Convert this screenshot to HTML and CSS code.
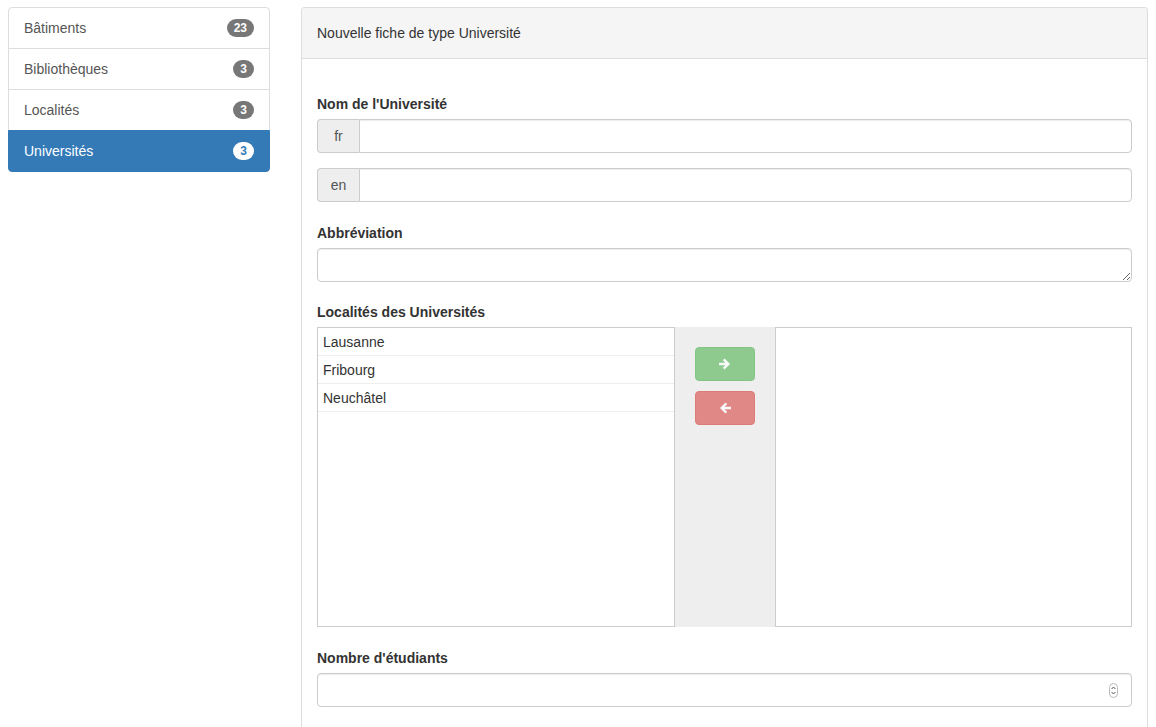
FILE: index.html
```html
<!DOCTYPE html>
<html lang="fr">
<head>
<meta charset="utf-8">
<title>Nouvelle fiche</title>
<link rel="stylesheet" href="styles.css">
</head>
<body>
<div class="page">
  <aside class="sidebar">
    <ul class="list-group">
      <li class="list-item"><span>Bâtiments</span><span class="badge">23</span></li>
      <li class="list-item"><span>Bibliothèques</span><span class="badge">3</span></li>
      <li class="list-item"><span>Localités</span><span class="badge">3</span></li>
      <li class="list-item active"><span>Universités</span><span class="badge">3</span></li>
    </ul>
  </aside>
  <main class="panel">
    <div class="panel-heading">Nouvelle fiche de type Université</div>
    <div class="panel-body">
      <div class="form-group">
        <label class="label">Nom de l'Université</label>
        <div class="input-group">
          <span class="addon">fr</span>
          <input class="control grouped" type="text">
        </div>
        <div class="input-group">
          <span class="addon">en</span>
          <input class="control grouped" type="text">
        </div>
      </div>
      <div class="form-group form-group-tight">
        <label class="label">Abbréviation</label>
        <textarea class="control textarea" rows="1"></textarea>
      </div>
      <div class="form-group">
        <label class="label">Localités des Universités</label>
        <div class="picker">
          <ul class="pick-list pick-left">
            <li class="pick-row">Lausanne</li>
            <li class="pick-row">Fribourg</li>
            <li class="pick-row">Neuchâtel</li>
          </ul>
          <div class="pick-actions">
            <button class="btn btn-add" type="button">
              <svg width="12" height="12" viewBox="0 0 12 12"><path d="M1 6h8M5.5 2.2 9.3 6 5.5 9.8" fill="none" stroke="#fff" stroke-width="2.4" stroke-linecap="square"/></svg>
            </button>
            <button class="btn btn-remove" type="button">
              <svg width="12" height="12" viewBox="0 0 12 12"><path d="M11 6H3M6.5 2.2 2.7 6 6.5 9.8" fill="none" stroke="#fff" stroke-width="2.4" stroke-linecap="square"/></svg>
            </button>
          </div>
          <ul class="pick-list pick-right"></ul>
        </div>
      </div>
      <div class="form-group">
        <label class="label">Nombre d'étudiants</label>
        <div class="number-wrap">
          <input class="control number" type="number">
          <svg class="spinner" width="9" height="15" viewBox="0 0 9 15"><rect x="0.5" y="0.5" width="8" height="14" rx="4" fill="#fff" stroke="#bbb"/><path d="M2.6 6 4.5 4 6.4 6M2.6 9 4.5 11 6.4 9" fill="none" stroke="#555" stroke-width="1"/></svg>
        </div>
      </div>
    </div>
  </main>
</div>
</body>
</html>
```

FILE: styles.css
```css
* { box-sizing: border-box; }
html, body { margin: 0; padding: 0; background: #fff; }
body {
  font-family: "Liberation Sans", Arial, Helvetica, sans-serif;
  font-size: 14px;
  line-height: 20px;
  color: #333;
}
.page {
  display: flex;
  align-items: flex-start;
  gap: 31px;
  padding: 7px 8px 0 8px;
}
.sidebar { width: 262px; flex: 0 0 262px; }
.list-group { list-style: none; margin: 0; padding: 0; }
.list-item {
  display: flex;
  justify-content: space-between;
  align-items: center;
  padding: 10px 15px;
  border: 1px solid #ddd;
  margin-bottom: -1px;
  background: #fff;
  color: #555;
}
.list-item:first-child { border-radius: 4px 4px 0 0; }
.list-item:last-child { border-radius: 0 0 4px 4px; }
.list-item.active {
  background: #337ab7;
  border-color: #337ab7;
  color: #fff;
  position: relative;
}
.badge {
  display: inline-block;
  min-width: 10px;
  padding: 3px 7px;
  font-size: 12px;
  font-weight: bold;
  line-height: 12px;
  color: #fff;
  background: #777;
  border-radius: 10px;
  text-align: center;
}
.list-item.active .badge { background: #fff; color: #337ab7; }

.panel {
  width: 847px;
  flex: 0 0 847px;
  border: 1px solid #ddd;
  border-radius: 4px 4px 0 0;
  border-bottom: none;
  min-height: 730px;
}
.panel-heading {
  background: #f5f5f5;
  border-bottom: 1px solid #ddd;
  padding: 15px;
  color: #333;
  border-radius: 3px 3px 0 0;
}
.panel-body { padding: 35px 15px 15px 15px; }
.form-group { margin-bottom: 21px; }
.form-group-tight { margin-bottom: 20px; }
.label {
  display: block;
  font-weight: bold;
  margin-bottom: 5px;
  color: #333;
}
.input-group {
  display: flex;
  height: 34px;
  margin-bottom: 15px;
}
.input-group:last-child { margin-bottom: 0; }
.addon {
  flex: 0 0 42px;
  display: flex;
  align-items: center;
  justify-content: center;
  background: #eee;
  border: 1px solid #ccc;
  border-right: none;
  border-radius: 4px 0 0 4px;
  color: #555;
}
.control {
  display: block;
  width: 100%;
  height: 34px;
  padding: 6px 12px;
  font-family: inherit;
  font-size: 14px;
  line-height: 20px;
  color: #555;
  background: #fff;
  border: 1px solid #ccc;
  border-radius: 4px;
  box-shadow: inset 0 1px 1px rgba(0,0,0,.075);
  outline: none;
  margin: 0;
}
.control.grouped { border-radius: 0 4px 4px 0; flex: 1; }
.textarea { resize: vertical; min-height: 34px; height: 34px; vertical-align: top; }
.picker {
  display: flex;
  height: 300px;
}
.pick-list {
  list-style: none;
  margin: 0;
  padding: 0;
  border: 1px solid #ccc;
  background: #fff;
}
.pick-left { flex: 0 0 358px; }
.pick-right { flex: 0 0 357px; }
.pick-row {
  height: 28px;
  padding: 4px 5px;
  border-bottom: 1px solid #eee;
  color: #333;
}
.pick-actions {
  flex: 1;
  background: #eee;
  display: flex;
  flex-direction: column;
  align-items: center;
  gap: 10px;
  padding-top: 20px;
  padding-right: 1px;
}
.btn {
  width: 60px;
  height: 34px;
  border-radius: 4px;
  border: 1px solid;
  display: flex;
  align-items: center;
  justify-content: center;
  padding: 0;
  opacity: .65;
}
.btn-add { background: #5cb85c; border-color: #4cae4c; }
.btn-remove { background: #d9534f; border-color: #d43f3a; }
.number-wrap { position: relative; }
.number { -moz-appearance: textfield; }
.number::-webkit-inner-spin-button,
.number::-webkit-outer-spin-button { -webkit-appearance: none; margin: 0; }
.spinner {
  position: absolute;
  right: 14px;
  top: 10px;
}
```
